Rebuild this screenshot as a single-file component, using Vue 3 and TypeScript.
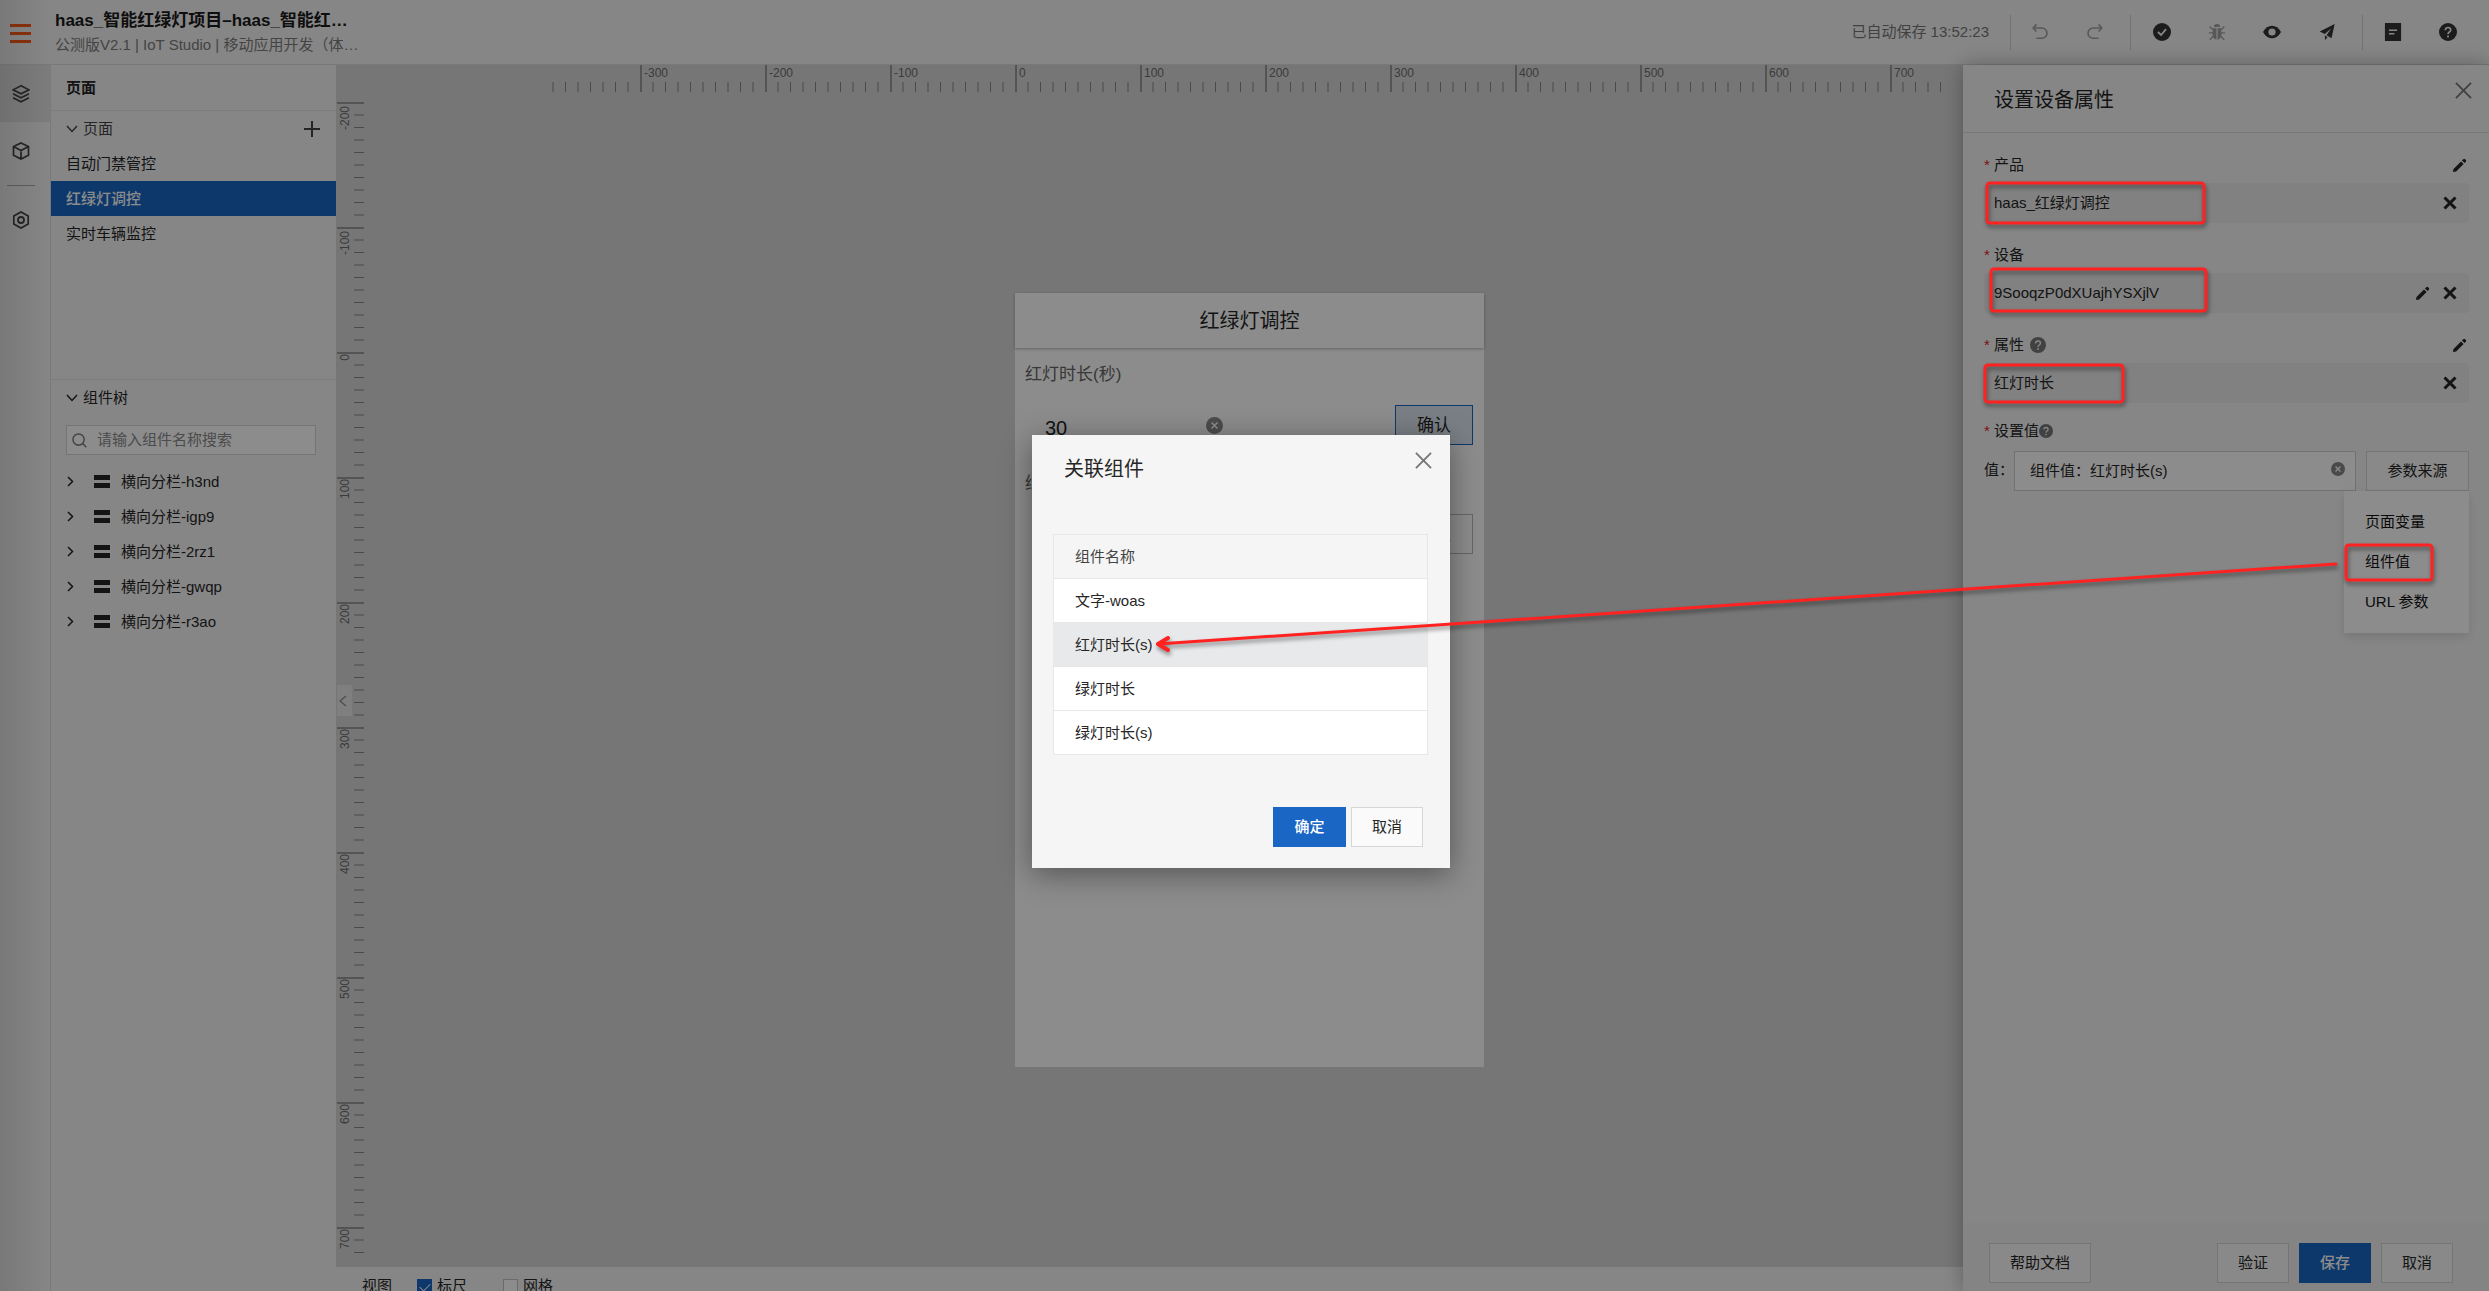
<script setup lang="ts">
import { ref } from 'vue'

interface Tick {
  pos: number
  major: boolean
  label: string
  gap: number
}

const UNIT = 125

function buildTicks(from: number, to: number, origin: number): Tick[] {
  const ticks: Tick[] = []
  for (let v = from; v <= to; v += 10) {
    ticks.push({
      pos: origin + (v * UNIT) / 100,
      major: v % 100 === 0,
      label: String(v),
      gap: v < 0 ? 3 : 1,
    })
  }
  return ticks
}

const horizontalTicks = buildTicks(-370, 740, 679)
const verticalTicks = buildTicks(-200, 720, 288)

const pages = ['自动门禁管控', '红绿灯调控', '实时车辆监控']
const activePage = ref('红绿灯调控')
const tree = ['横向分栏-h3nd', '横向分栏-igp9', '横向分栏-2rz1', '横向分栏-gwqp', '横向分栏-r3ao']
const keyword = ref('')

const rows = ['文字-woas', '红灯时长(s)', '绿灯时长', '绿灯时长(s)']
const selectedRow = ref('红灯时长(s)')

const showRuler = ref(true)
const showGrid = ref(false)
const redSeconds = ref('30')
const boundValue = ref('组件值：红灯时长(s)')
const sources = ['页面变量', '组件值', 'URL 参数']
</script>

<template>
  <div class="app">
    <svg class="sprite" aria-hidden="true">
      <symbol id="i-close" viewBox="0 0 18 18">
        <path d="M1 1L17 17M17 1L1 17" fill="none" stroke="currentColor" stroke-width="2" />
      </symbol>
      <symbol id="i-cross" viewBox="0 0 14 14">
        <path d="M1.5 1.5L12.5 12.5M12.5 1.5L1.5 12.5" fill="none" stroke="currentColor" stroke-width="3" />
      </symbol>
      <symbol id="i-pencil" viewBox="0 0 16 16">
        <path d="M1 15L1.6 11.6L9.6 3.6L12.4 6.4L4.4 14.4ZM10.6 2.6L12 1.2Q13 .5 14 1.4L14.8 2.2Q15.500 3 14.800 4L13.400 5.400Z" fill="currentColor" />
      </symbol>
      <symbol id="i-help" viewBox="0 0 20 20">
        <circle cx="10" cy="10" r="10" fill="currentColor" />
        <path d="M7 8Q7 5 10 5T13 7.700Q13 9 11.500 10Q10 11 10 12.500" fill="none" stroke="var(--hole)" stroke-width="1.800" />
        <circle cx="10" cy="15" r="1.200" fill="var(--hole)" />
      </symbol>
      <symbol id="i-clear" viewBox="0 0 20 20">
        <circle cx="10" cy="10" r="10" fill="currentColor" />
        <path d="M6.500 6.500L13.500 13.500M13.500 6.500L6.500 13.500" fill="none" stroke="var(--hole)" stroke-width="1.800" />
      </symbol>
      <symbol id="i-down" viewBox="0 0 12 12">
        <path d="M1 3L6 8.500L11 3" fill="none" stroke="currentColor" stroke-width="1.500" />
      </symbol>
      <symbol id="i-right" viewBox="0 0 12 12">
        <path d="M1 1L5.500 5.500L1 10" fill="none" stroke="currentColor" stroke-width="1.500" />
      </symbol>
    </svg>

    <header class="topbar">
      <button class="menu" type="button" aria-label="菜单"><i></i><i></i><i></i></button>
      <div class="heading">
        <h1>haas_智能红绿灯项目–haas_智能红…</h1>
        <p>公测版V2.1 | IoT Studio | 移动应用开发（体…</p>
      </div>
      <span class="saved">已自动保存 13:52:23</span>
      <div class="tools history">
        <button type="button" class="dim" aria-label="撤销">
          <svg viewBox="0 0 20 20"><path d="M6 1.500L2.500 5.500L6 9.500M2.500 5.500H12A5.500 5.500 0 0 1 12 17H6" fill="none" stroke="currentColor" stroke-width="1.800" /></svg>
        </button>
        <button type="button" class="dim" aria-label="重做">
          <svg viewBox="0 0 20 20"><path d="M14 1.500L17.500 5.500L14 9.500M17.500 5.500H8A5.500 5.500 0 0 0 8 17H14" fill="none" stroke="currentColor" stroke-width="1.800" /></svg>
        </button>
      </div>
      <div class="tools wide">
        <button type="button" aria-label="验证">
          <svg viewBox="0 0 20 20"><circle cx="10" cy="10" r="10" fill="currentColor" /><path d="M5.500 10L9 13.300L14.500 6.800" fill="none" stroke="#f5f5f5" stroke-width="2" /></svg>
        </button>
        <button type="button" class="dim" aria-label="调试">
          <svg viewBox="0 0 20 20"><path d="M6.500 4.500A3.500 3.500 0 0 1 13.500 4.500Z" fill="currentColor" /><path d="M5.500 5.800H9.400V18.500Q5 17.500 5 12ZM14.500 5.800H10.600V18.500Q15 17.500 15 12Z" fill="currentColor" /><path d="M1.800 4L5.500 7.500M1 11H5.500M2 18.500L6 14.500M18.200 4L14.500 7.500M19 11H14.500M18 18.500L14 14.500" stroke="currentColor" stroke-width="1.500" /></svg>
        </button>
        <button type="button" aria-label="预览">
          <svg viewBox="0 0 20 20"><path d="M0 10Q4 3 10 3T20 10Q16 17 10 17T0 10Z" fill="currentColor" /><circle cx="10" cy="10" r="4" fill="#f5f5f5" /></svg>
        </button>
        <button type="button" aria-label="发布">
          <svg viewBox="0 0 20 20"><path d="M18.500 1L15 17L9.500 13.500L14.500 6L7.500 12.300L2 9.500ZM7.500 13.500L10.500 15.800L8 19Z" fill="currentColor" /></svg>
        </button>
      </div>
      <div class="tools">
        <button type="button" aria-label="文档">
          <svg viewBox="0 0 20 20"><path d="M1 0H19V20H1Z" fill="currentColor" /><path d="M5.500 8H14.500M5.500 12H11.500" stroke="#f5f5f5" stroke-width="1.800" /></svg>
        </button>
        <button type="button" aria-label="帮助">
          <svg><use href="#i-help" /></svg>
        </button>
      </div>
    </header>

    <div class="body">
      <nav class="rail">
        <button type="button" class="on" aria-label="页面">
          <svg viewBox="0 0 18 18"><path d="M9 .8L17 4.800L9 8.800L1 4.800ZM1 8.800L9 12.800L17 8.800M1 12.800L9 16.800L17 12.800" fill="none" stroke="currentColor" stroke-width="1.600" /></svg>
        </button>
        <button type="button" aria-label="组件">
          <svg viewBox="0 0 18 18"><path d="M9 .9L16.500 4.500V13.200L9 17.100L1.500 13.200V4.500ZM1.500 4.500L9 8.500L16.500 4.500M9 8.500V17" fill="none" stroke="currentColor" stroke-width="1.700" /></svg>
        </button>
        <hr />
        <button type="button" aria-label="设置">
          <svg viewBox="0 0 18 18"><path d="M9 .9L16.200 5V13L9 17.100L1.800 13V5Z" fill="none" stroke="currentColor" stroke-width="1.700" /><circle cx="9" cy="9" r="3" fill="none" stroke="currentColor" stroke-width="1.800" /></svg>
        </button>
      </nav>

      <aside class="side">
        <h2>页面</h2>
        <section class="pages">
          <div class="group">
            <svg class="chev"><use href="#i-down" /></svg>
            <span>页面</span>
            <button type="button" class="add" aria-label="新增页面">
              <svg viewBox="0 0 16 16"><path d="M8 0V16M0 8H16" stroke="currentColor" stroke-width="2" /></svg>
            </button>
          </div>
          <ul>
            <li v-for="p in pages" :key="p">
              <button type="button" :class="{ current: p === activePage }" @click="activePage = p">{{ p }}</button>
            </li>
          </ul>
        </section>
        <section>
          <div class="group tree-head">
            <svg class="chev"><use href="#i-down" /></svg>
            <span>组件树</span>
          </div>
          <label class="search">
            <svg viewBox="0 0 16 16"><circle cx="7" cy="7" r="6" fill="none" stroke="currentColor" stroke-width="1.500" /><path d="M11.300 11.300L15.300 15.300" stroke="currentColor" stroke-width="1.500" /></svg>
            <input v-model="keyword" type="text" placeholder="请输入组件名称搜索" aria-label="搜索组件" />
          </label>
          <ul class="tree">
            <li v-for="n in tree" :key="n">
              <svg class="chev"><use href="#i-right" /></svg>
              <i class="bars"></i>
              <span>{{ n }}</span>
            </li>
          </ul>
        </section>
      </aside>

      <main class="stage">
        <div class="canvas">
          <svg class="ruler across">
            <g v-for="t in horizontalTicks" :key="t.pos">
              <rect :x="t.pos" :y="t.major ? 0 : 17" :width="t.major ? 2 : 1" :height="t.major ? 27 : 10" :class="{ major: t.major }" />
              <text v-if="t.major" :x="t.pos + 4" y="12">{{ t.label }}</text>
            </g>
          </svg>
          <svg class="ruler down">
            <g v-for="t in verticalTicks" :key="t.pos">
              <rect :x="t.major ? 1 : 18" :y="t.pos - 1" :width="t.major ? 27 : 10" :height="t.major ? 2 : 1" :class="{ major: t.major }" />
              <text v-if="t.major" text-anchor="end" :transform="`translate(13 ${t.pos + t.gap}) rotate(-90)`">{{ t.label }}</text>
            </g>
          </svg>
          <button type="button" class="fold" aria-label="收起">
            <svg viewBox="0 0 8 12"><path d="M7 1L1 6L7 11" fill="none" stroke="currentColor" stroke-width="1.200" /></svg>
          </button>

          <div class="phone">
            <div class="phone-bar">红绿灯调控</div>
            <p class="caption">红灯时长(秒)</p>
            <div class="line">
              <input v-model="redSeconds" type="text" aria-label="红灯时长(秒)" />
              <svg class="clear"><use href="#i-clear" /></svg>
              <button type="button" class="picked">确认</button>
            </div>
            <p class="caption">绿灯时长(秒)</p>
            <div class="line">
              <input type="text" aria-label="绿灯时长(秒)" />
              <button type="button">确认</button>
            </div>
          </div>
        </div>
        <footer class="view">
          <span>视图</span>
          <label><input v-model="showRuler" type="checkbox" />标尺</label>
          <label><input v-model="showGrid" type="checkbox" />网格</label>
        </footer>
      </main>

      <aside class="drawer">
        <div class="drawer-head">
          <h2>设置设备属性</h2>
          <button type="button" aria-label="关闭"><svg><use href="#i-close" /></svg></button>
        </div>
        <div class="form">
          <div class="label"><b>*</b><span>产品</span><svg class="edit"><use href="#i-pencil" /></svg></div>
          <div class="value"><span>haas_红绿灯调控</span><svg class="x"><use href="#i-cross" /></svg></div>
          <div class="label"><b>*</b><span>设备</span></div>
          <div class="value"><span>9SooqzP0dXUajhYSXjlV</span><svg class="pen"><use href="#i-pencil" /></svg><svg class="x"><use href="#i-cross" /></svg></div>
          <div class="label"><b>*</b><span>属性</span><svg class="tip"><use href="#i-help" /></svg><svg class="edit"><use href="#i-pencil" /></svg></div>
          <div class="value"><span>红灯时长</span><svg class="x"><use href="#i-cross" /></svg></div>
          <div class="label last"><b>*</b><span>设置值</span><svg class="tip near"><use href="#i-help" /></svg></div>
          <div class="assign">
            <label for="bound">值：</label>
            <div class="box">
              <input id="bound" v-model="boundValue" type="text" />
              <svg><use href="#i-clear" /></svg>
            </div>
            <div class="source">
              <button type="button" class="btn">参数来源</button>
              <ul>
                <li v-for="s in sources" :key="s"><button type="button">{{ s }}</button></li>
              </ul>
            </div>
          </div>
        </div>
        <div class="drawer-foot">
          <button type="button" class="btn help">帮助文档</button>
          <button type="button" class="btn">验证</button>
          <button type="button" class="btn primary">保存</button>
          <button type="button" class="btn">取消</button>
        </div>
      </aside>
    </div>

    <div class="mask">
      <div class="modal" role="dialog" aria-labelledby="dialog-title">
        <div class="modal-head">
          <h2 id="dialog-title">关联组件</h2>
          <button type="button" aria-label="关闭"><svg><use href="#i-close" /></svg></button>
        </div>
        <div class="modal-body">
          <table>
            <thead>
              <tr><th scope="col">组件名称</th></tr>
            </thead>
            <tbody>
              <tr v-for="r in rows" :key="r" :class="{ selected: r === selectedRow }" @click="selectedRow = r">
                <td>{{ r }}</td>
              </tr>
            </tbody>
          </table>
        </div>
        <div class="modal-foot">
          <button type="button" class="btn primary">确定</button>
          <button type="button" class="btn">取消</button>
        </div>
      </div>
    </div>

    <svg class="marks" viewBox="0 0 1360 700" aria-hidden="true">
      <g fill="none" stroke="#ff2220" stroke-width="3" stroke-linejoin="round">
        <rect x="858" y="183" width="217" height="40" rx="3" />
        <rect x="862" y="269" width="215" height="42" rx="3" />
        <rect x="856" y="365" width="138" height="37" rx="3" />
        <rect x="1217" y="545" width="86" height="35" rx="3" />
        <path d="M1207 564L29 644" stroke-linecap="round" />
        <path d="M39 638L29 644L39 650" stroke-width="4" stroke-linecap="round" />
      </g>
    </svg>
  </div>
</template>

<style>
html,
body {
  height: 100%;
  overflow: hidden;
}
#app {
  height: 100%;
}
</style>

<style scoped>
* {
  box-sizing: border-box;
}
.app {
  --hole: #f5f5f5;
  position: relative;
  display: flex;
  flex-direction: column;
  height: 100%;
  overflow: hidden;
  background: #f5f5f5;
  color: #262626;
  font: 15px/20px "Liberation Sans", "Noto Sans CJK SC", sans-serif;
}
button,
input {
  margin: 0;
  padding: 0;
  border: 0;
  border-radius: 0;
  background: none;
  color: inherit;
  font: inherit;
  outline: 0;
}
h1,
h2,
p,
ul {
  margin: 0;
  padding: 0;
  list-style: none;
}
svg {
  flex: none;
}
.sprite {
  position: absolute;
  width: 0;
  height: 0;
}

/* top bar */
.topbar {
  flex: none;
  display: flex;
  align-items: center;
  height: 65px;
  padding: 0 11px 0 10px;
  border-bottom: 1px solid #dcdcdc;
}
.menu {
  display: flex;
  flex-direction: column;
  gap: 5px;
  width: 21px;
  margin-top: 2px;
  margin-right: 24px;
}
.menu i {
  height: 3px;
  background: #ff5a1a;
}
.heading {
  flex: 1;
}
h1 {
  font-size: 17px;
  line-height: 26px;
  font-weight: 600;
  color: #1a1a1a;
}
.heading p {
  line-height: 22px;
  color: #7c7c7c;
}
.saved {
  margin-right: 21px;
  color: #777;
}
.tools {
  display: flex;
  gap: 25px;
  height: 35px;
  padding: 0 15px;
  border-left: 1px solid #d0d0d0;
}
.tools.history {
  padding: 0 20px 0 14px;
}
.tools.wide {
  padding: 0 20px 0 16px;
}
.tools button {
  display: flex;
  align-items: center;
  justify-content: center;
  width: 30px;
  color: #333;
}
.tools .dim {
  color: #a0a0a0;
}
.tools svg {
  width: 18px;
  height: 18px;
}

/* left rail */
.body {
  flex: 1;
  display: flex;
  min-height: 0;
}
.rail {
  flex: none;
  display: flex;
  flex-direction: column;
  width: 51px;
  border-right: 1px solid #dcdcdc;
  color: #444;
}
.rail button {
  height: 57px;
  padding-right: 8px;
}
.rail .on {
  background: #e2e2e2;
}
.rail svg {
  display: block;
  width: 18px;
  height: 18px;
  margin: 0 auto;
}
.rail hr {
  width: 28px;
  height: 1px;
  margin: 6px 0 5px 7px;
  border: 0;
  background: #aaa;
}

/* page list and component tree */
.side {
  flex: none;
  width: 285px;
}
.side h2 {
  height: 46px;
  padding-left: 15px;
  border-bottom: 1px solid #e2e2e2;
  font-size: 15px;
  line-height: 46px;
  font-weight: 600;
}
.pages {
  height: 269px;
  border-bottom: 1px solid #e2e2e2;
}
.group {
  display: flex;
  align-items: center;
  height: 35px;
  padding: 0 16px 0 15px;
  color: #444;
}
.chev {
  width: 12px;
  height: 12px;
}
.group span {
  flex: 1;
  margin-left: 5px;
}
.add svg {
  display: block;
  width: 16px;
  height: 16px;
}
.side li button {
  width: 100%;
  height: 35px;
  padding-left: 15px;
  text-align: left;
}
.side li .current {
  background: #1966c4;
  color: #fff;
  font-weight: 500;
}
.tree-head {
  color: #262626;
}
.search {
  display: flex;
  align-items: center;
  width: 250px;
  height: 30px;
  margin: 10px 0 9px 15px;
  padding: 0 5px;
  border: 1px solid #d6d6d6;
  background: #fff;
  color: #777;
}
.search svg {
  width: 15px;
  height: 15px;
}
.search input {
  flex: 1;
  min-width: 0;
  margin-left: 10px;
}
.search input::placeholder {
  color: #8a8a8a;
  opacity: 1;
}
.tree li {
  display: flex;
  align-items: center;
  height: 35px;
  padding-left: 16px;
}
.tree .chev {
  margin-right: 15px;
}
.bars {
  width: 16px;
  height: 13px;
  margin-right: 11px;
  border: solid #262626;
  border-width: 5px 0;
}

/* design stage */
.stage {
  flex: 1;
  display: flex;
  flex-direction: column;
  min-width: 0;
}
.canvas {
  position: relative;
  flex: 1;
  overflow: hidden;
  background: #d8d8d8;
}
.ruler {
  position: absolute;
  top: 0;
  left: 0;
}
.across {
  width: 100%;
  height: 28px;
}
.down {
  width: 29px;
  height: 100%;
}
.ruler rect {
  fill: #888;
}
.ruler .major {
  fill: #999;
}
.ruler text {
  fill: #6c6c6c;
  font-size: 12px;
}
.fold {
  position: absolute;
  top: 620px;
  left: 1px;
  width: 15px;
  height: 31px;
  background: #e8e8e8;
  color: #888;
}
.fold svg {
  display: block;
  width: 8px;
  height: 12px;
  margin-left: 2px;
}
.phone {
  position: absolute;
  top: 228px;
  left: 679px;
  width: 469px;
  height: 774px;
  background: #fff;
}
.phone-bar {
  height: 55px;
  margin-bottom: 15px;
  box-shadow: 0 1px 3px rgba(0, 0, 0, 0.3);
  font-size: 20px;
  line-height: 56px;
  text-align: center;
}
.caption {
  padding-left: 10px;
  color: #666;
  font-size: 17px;
  line-height: 24px;
}
.line {
  display: flex;
  align-items: center;
  height: 40px;
  margin: 18px 11px 27px 30px;
}
.line input {
  width: 161px;
  padding-top: 6px;
  font-size: 20px;
  line-height: 24px;
}
.line button {
  width: 78px;
  height: 40px;
  margin-left: auto;
  padding-top: 2px;
  border: 1px solid #bbb;
  font-size: 17px;
}
.line .picked {
  border: 1px solid #1966c4;
  background: #dfe8f3;
}
.clear {
  --hole: #fff;
  width: 17px;
  height: 17px;
  color: #8a8a8a;
}
.view {
  flex: none;
  display: flex;
  height: 24px;
  padding: 9px 0 0 26px;
  overflow: hidden;
}
.view span {
  width: 55px;
}
.view label {
  display: flex;
  width: 86px;
  gap: 5px;
}
.view input {
  appearance: none;
  flex: none;
  width: 15px;
  height: 15px;
  margin-top: 3px;
  border: 1px solid #c4c4c4;
  background: #fff;
}
.view input:checked {
  border-color: #1966c4;
  background: #1966c4;
}
.view input:checked::before {
  content: "";
  display: block;
  width: 9px;
  height: 5px;
  margin: 3px 0 0 2px;
  border: solid #fff;
  border-width: 0 0 1px 1px;
  transform: rotate(-45deg);
}

/* settings drawer */
.drawer {
  position: relative;
  flex: none;
  display: flex;
  flex-direction: column;
  width: 526px;
  background: #f5f5f5;
  box-shadow: 0 0 20px rgba(0, 0, 0, 0.3);
}
.drawer-head {
  flex: none;
  display: flex;
  justify-content: space-between;
  height: 68px;
  padding: 0 17px 0 31px;
  border-bottom: 1px solid #d9d9d9;
}
.drawer-head h2 {
  font-size: 20px;
  line-height: 70px;
  font-weight: 400;
}
.drawer-head button,
.modal-head button {
  align-self: flex-start;
  margin-top: 17px;
  color: #777;
}
.drawer-head svg,
.modal-head svg {
  display: block;
  width: 17px;
  height: 17px;
}
.form {
  flex: 1;
  padding: 22px 20px 0 21px;
}
.label {
  display: flex;
  align-items: center;
  height: 28px;
  padding-bottom: 8px;
  margin-top: 22px;
}
.label:first-child {
  margin-top: 0;
}
.label b {
  width: 10px;
  color: #e0202a;
  font-size: 15px;
  font-weight: 400;
}
.label .edit {
  width: 15px;
  height: 15px;
  margin-left: auto;
  margin-right: 2px;
}
.tip {
  width: 16px;
  height: 16px;
  margin-left: 6px;
  color: #777;
}
.tip.near {
  width: 14px;
  height: 14px;
  margin-left: 0;
}
.label.last {
  margin-top: 18px;
}
.value {
  display: flex;
  align-items: center;
  height: 40px;
  padding: 0 12px 0 10px;
  border-radius: 4px;
  background: #ebebeb;
}
.value span {
  flex: 1;
}
.value .pen {
  width: 15px;
  height: 15px;
  margin-right: 13px;
}
.value .x {
  width: 14px;
  height: 14px;
}
.assign {
  display: flex;
  margin-top: 2px;
}
.assign label {
  width: 30px;
  line-height: 38px;
}
.box {
  flex: 1;
  display: flex;
  align-items: center;
  height: 40px;
  margin-right: 10px;
  padding: 0 10px 0 15px;
  border: 1px solid #cfcfcf;
  background: #fff;
}
.box input {
  flex: 1;
  min-width: 0;
}
.box svg {
  --hole: #fff;
  width: 14px;
  height: 14px;
  margin-bottom: 5px;
  color: #888;
}
.source {
  position: relative;
}
.source ul {
  position: absolute;
  top: 40px;
  right: 0;
  width: 125px;
  padding: 11px 0;
  background: #fff;
  box-shadow: 0 4px 10px rgba(0, 0, 0, 0.12);
}
.source li button {
  width: 100%;
  height: 40px;
  padding-left: 21px;
  color: #111;
  text-align: left;
}
.btn {
  height: 40px;
  padding: 0 20px;
  border: 1px solid #d6d6d6;
  background: #fafafa;
  white-space: nowrap;
}
.source .btn {
  width: 103px;
}
.btn.primary {
  border-color: #1966c4;
  background: #1966c4;
  color: #fff;
  font-weight: 500;
}
.drawer-foot {
  flex: none;
  display: flex;
  gap: 10px;
  height: 68px;
  padding: 20px 36px 0 26px;
  background: #f0f0f0;
}
.help {
  margin-right: auto;
}

/* dialog */
.mask {
  position: absolute;
  inset: 0;
  display: flex;
  align-items: center;
  justify-content: center;
  padding: 12px 7px 0 0;
  background: linear-gradient(90deg, rgba(0, 0, 0, 0.1), transparent 50px), rgba(0, 0, 0, 0.45);
}
.modal {
  width: 418px;
  background: #f5f5f5;
  box-shadow: 0 6px 28px rgba(0, 0, 0, 0.4);
}
.modal-head {
  display: flex;
  justify-content: space-between;
  padding: 0 18px 31px 32px;
}
.modal-head h2 {
  font-size: 20px;
  line-height: 68px;
  font-weight: 400;
}
.modal-body {
  padding: 0 22px 52px 21px;
}
table {
  width: 100%;
  border: 1px solid #e6e7e8;
  border-collapse: separate;
  border-spacing: 0;
}
th,
td {
  height: 44px;
  padding: 0 21px;
  border-bottom: 1px solid #e6e7e8;
  text-align: left;
}
th {
  color: #444;
  font-weight: 400;
}
td {
  background: #fff;
}
.selected td {
  background: #e8e9eb;
}
tr:last-child td {
  height: 43px;
  border-bottom: 0;
}
.modal-foot {
  display: flex;
  justify-content: flex-end;
  gap: 5px;
  padding: 0 27px 21px;
}
.modal-foot .primary {
  width: 73px;
}

/* red callouts above the dimmed page */
.marks {
  position: absolute;
  top: 0;
  right: 0;
  width: 1360px;
  height: 700px;
  filter: drop-shadow(1px 3px 2px rgba(0, 0, 0, 0.45));
  pointer-events: none;
}
</style>
